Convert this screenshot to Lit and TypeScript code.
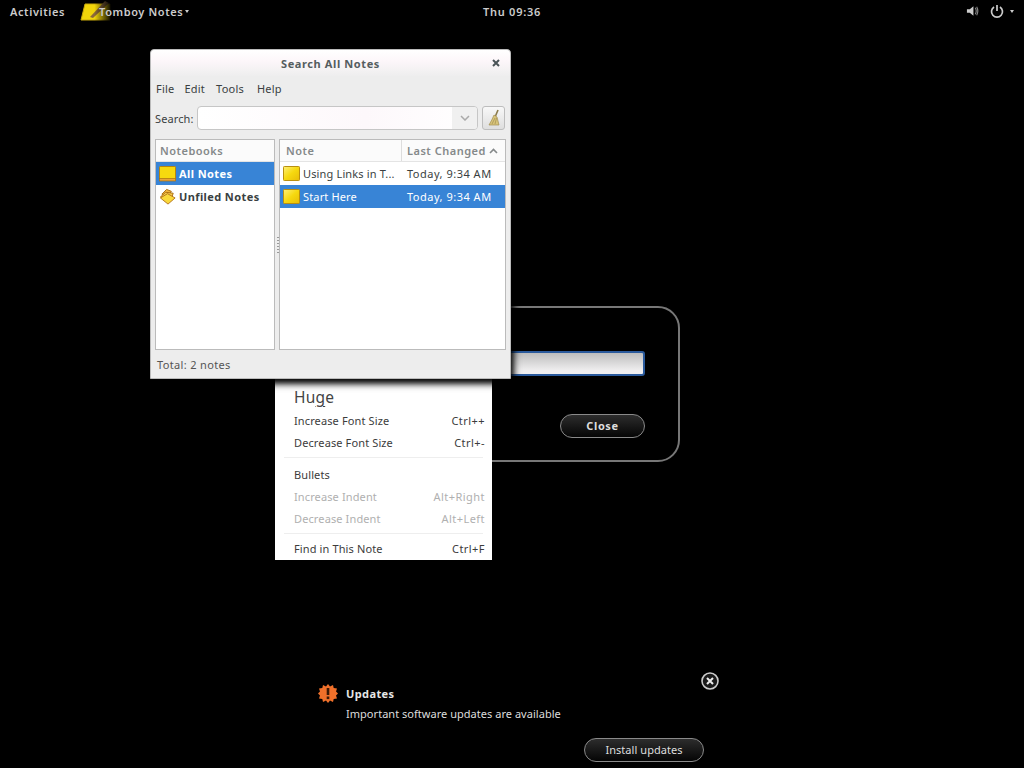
import { LitElement, html, css } from "lit";
import { customElement } from "lit/decorators.js";

const noteIcon = (sel = false) => html`<svg class="nicon" width="18" height="16" viewBox="0 0 18 16">
  <defs><linearGradient id="ng${sel ? 1 : 0}" x1="0" y1="0" x2="1" y2="1"><stop offset="0" stop-color="#fff07a"/><stop offset=".5" stop-color="#f6d90f"/><stop offset="1" stop-color="#e8bd08"/></linearGradient></defs>
  <rect x=".5" y=".5" width="16" height="14" rx=".8" fill="url(#ng${sel ? 1 : 0})" stroke="#b88f10"/>
</svg>`;

const bookIcon = html`<svg class="nicon" width="18" height="16" viewBox="0 0 18 16">
  <rect x=".5" y=".5" width="16" height="14" rx=".8" fill="#f6d90f" stroke="#b8860b"/>
  <rect x=".5" y="12.5" width="16" height="2.5" fill="#e8a33a" stroke="#a8700f" stroke-width=".7"/>
</svg>`;

const unfiledIcon = html`<svg class="nicon" width="18" height="18" viewBox="0 0 19 18">
  <path d="M3 6 L8 1 L13 3 L10 8Z" fill="#f3b640" stroke="#a86c10"/>
  <path d="M1.5 9 L7 4 L15 5 L13 11Z" fill="#f5c94a" stroke="#a86c10"/>
  <path d="M1.5 10 L9 5.5 L17 10 L9.5 16.5Z" fill="#f9d93a" stroke="#b5741a"/>
</svg>`;

@customElement("app-root")
export class AppRoot extends LitElement {
  static styles = css`
    :host { display: block; width: 1024px; height: 768px; background: #000; overflow: hidden; position: relative;
      font-family: "Noto Sans", "Open Sans", sans-serif; font-size: 11px; color: #3a3f41; letter-spacing: .3px; }
    * { box-sizing: border-box; }
    .panel { position: absolute; left: 0; top: 0; width: 1024px; height: 22px; display: grid; grid-template-columns: 1fr auto 1fr; align-items: center;
      color: #ccc; font-weight: 600; font-size: 11px; letter-spacing: .6px; }
    .pl { display: flex; align-items: center; padding-left: 10px; }
    .appmenu { display: flex; align-items: center; margin-left: 15px; position: relative; }
    .appname { margin-left: -13px; }
    .tri { width: 0; height: 0; border: 2.5px solid transparent; border-top: 3px solid #ccc; border-bottom: 0; margin-left: 2px; }
    .clock { font-weight: 600; color: #ccc; letter-spacing: .75px; }
    .pr { display: flex; justify-content: flex-end; align-items: center; gap: 9px; padding-right: 10px; }
    .power { display: flex; align-items: center; gap: 6px; margin-left: 2px; }
    .power .tri { margin: 0; }

    .dialog { position: absolute; left: 300px; top: 306px; width: 380px; height: 156px; border: 2px solid #777; border-radius: 22px; background: #000;
      display: flex; flex-direction: column; align-items: flex-end; padding: 43px 33px 0 0; }
    .entry { width: 160px; height: 25px; border: 2px solid #2a5a9c; border-radius: 3px; background: linear-gradient(#bdbdbd, #f0eff0 85%); }
    .pill { border: 1px solid #8a8a8a; border-radius: 13px; background: linear-gradient(#2d2d2d, #050505); color: #ddd;
      display: flex; align-items: center; justify-content: center; font-size: 11px; padding-bottom: 1px; }
    .close { margin-top: 38px; width: 85px; height: 24px; font-weight: 700; letter-spacing: .6px; }

    .menu { position: absolute; left: 275px; top: 378px; width: 217px; height: 182px; background: #fff; overflow: hidden; padding-top: 6px; color: #444; }
    .huge { font-size: 15.5px; padding-left: 19px; height: 26px; line-height: 26px; letter-spacing: .2px; }
    .huge u { text-underline-offset: 3px; }
    .mi { display: flex; justify-content: space-between; height: 22px; line-height: 22px; padding: 0 7px 0 19px; font-size: 11px; color: #3c3c3c; letter-spacing: .12px; }
    .mi.dis { color: #b0b0b0; }
    .key { letter-spacing: .45px; }
    .sep { height: 1px; background: #eee; margin: 3px 9px 6px; }
    .sep.b { margin-bottom: 4px; }

    .win { position: absolute; left: 150px; top: 49px; width: 361px; height: 330px; background: #ededed; border-radius: 4px 4px 0 0;
      border: 1px solid #bbb; display: flex; flex-direction: column; box-shadow: 0 2px 6px 1px #000, 0 2px 9px 2px rgba(0,0,0,.8); }
    .tb { height: 26px; flex: none; background: linear-gradient(#fff 0, #fdf7fa 40%, #eee 100%); border-radius: 4px 4px 0 0; display: flex; align-items: center; justify-content: center; position: relative;
      font-weight: 700; font-size: 11px; color: #555d5f; letter-spacing: .6px; }
    .x { position: absolute; right: 9px; top: 8px; }
    .mb { display: flex; gap: 11px; padding: 0 5px; height: 24px; align-items: center; flex: none; letter-spacing: .22px; }
    .mb span:nth-child(2) { margin-left: -1px; }
    .mb span:nth-child(4) { margin-left: 2px; }
    .search { display: flex; align-items: center; height: 24px; margin: 6px 5px 0 4px; flex: none; }
    .search label { width: 42px; letter-spacing: .1px; }
    .combo { flex: 1; height: 24px; background: linear-gradient(90deg, #fff 0, #fdf8fb 60%, #fff 100%); border: 1px solid #c6c6c6; border-radius: 4px; display: flex; justify-content: flex-end; overflow: hidden; }
    .drop { width: 25px; background: #f0f0f0; display: flex; align-items: center; justify-content: center; }
    .clr { width: 23px; height: 24px; margin-left: 4px; border: 1px solid #bdbdbd; border-radius: 3px; background: linear-gradient(#f8f8f8, #dedede); display: flex; align-items: center; justify-content: center; }
    .panes { flex: 1; display: flex; margin: 9px 4px 0 4px; gap: 4px; min-height: 0; }
    .pane { background: #fff; border: 1px solid #bbb; display: flex; flex-direction: column; position: relative; }
    .p1 { width: 120px; flex: none; }
    .p2 { flex: 1; }
    .grip { position: absolute; left: -3px; top: 97px; width: 2px; height: 16px;
      background: repeating-linear-gradient(#999 0 1px, #eee 1px 3px); }
    .hd { height: 22px; flex: none; display: flex; align-items: center; color: #85898a; font-weight: 600; font-size: 11px; letter-spacing: .5px; border-bottom: 1px solid #e4e4e4; background: #fbfbfb; }
    .hd span { padding-left: 4px; }
    .row { height: 23px; display: flex; align-items: center; }
    .row.sel { background: #3884d6; color: #fff; }
    .nb { font-weight: 700; gap: 2px; padding-left: 3px; letter-spacing: .4px; }
    .c1 { width: 122px; flex: none; display: flex; align-items: center; padding-left: 3px; gap: 2px; white-space: nowrap; overflow: hidden; letter-spacing: .15px; }
    .c2 { flex: 1; padding-left: 5px; white-space: nowrap; letter-spacing: .5px; }
    .hd .c1 { height: 100%; border-right: 1px solid #ddd; padding-left: 2px; letter-spacing: .5px; }
    .hd .c2 { display: flex; align-items: center; gap: 3px; padding-left: 5px; }
    .hd .c2 span { padding: 0; }
    .status { height: 28px; flex: none; padding: 1px 6px 0; display: flex; align-items: center; color: #555; letter-spacing: .35px; }

    .n-ic { position: absolute; left: 318px; top: 684px; }
    .n-txt { position: absolute; left: 346px; top: 686px; color: #ddd; display: flex; flex-direction: column; gap: 4px; font-size: 11px; }
    .n-t { font-weight: 700; color: #e6e6e6; letter-spacing: .4px; height: 16px; line-height: 16px; }
    .n-b { height: 16px; line-height: 16px; letter-spacing: .03px; }
    .n-x { position: absolute; left: 701px; top: 672px; }
    .n-btn { position: absolute; left: 584px; top: 738px; width: 120px; height: 24px; letter-spacing: .05px; }
  `;

  render() {
    return html`
      <div class="panel">
        <div class="pl">
          <span>Activities</span>
          <div class="appmenu">
            <svg width="32" height="20" viewBox="0 0 32 20">
              <defs><linearGradient id="fade" x1="0" x2="1" y1="0" y2="0"><stop offset=".45" stop-color="#fff"/><stop offset="1" stop-color="#000"/></linearGradient>
                <mask id="fm"><rect width="32" height="20" fill="url(#fade)"/></mask></defs>
              <g mask="url(#fm)">
                <path d="M5 3 H30 V19 H1Z" fill="#f1d40a" stroke="#c9a90a"/>
                <path d="M10 16 L25 0 L29 2 L13 17Z" fill="#8d6a3a"/>
              </g>
            </svg>
            <span class="appname">Tomboy Notes</span><i class="tri"></i>
          </div>
        </div>
        <div class="clock">Thu 09:36</div>
        <div class="pr">
          <svg width="13" height="14" viewBox="0 0 14 14"><path d="M1 5 H4 L8 2 V12 L4 9 H1Z" fill="#ccc"/><path d="M10 3.5 Q12 7 10 10.5 M11.5 2.5 Q14 7 11.5 11.5" fill="none" stroke="#888" stroke-width="1.2"/></svg>
          <span class="power">
            <svg width="14" height="14" viewBox="0 0 14 14"><path d="M4 3 A5.5 5.5 0 1 0 10 3" fill="none" stroke="#ccc" stroke-width="1.7"/><path d="M7 1 V7" stroke="#ccc" stroke-width="1.7"/></svg>
            <i class="tri"></i>
          </span>
        </div>
      </div>

      <div class="dialog">
        <div class="entry"></div>
        <div class="pill close">Close</div>
      </div>

      <div class="menu">
        <div class="huge">Hu<u>g</u>e</div>
        <div class="mi"><span>Increase Font Size</span><span class="key">Ctrl++</span></div>
        <div class="mi"><span>Decrease Font Size</span><span class="key">Ctrl+-</span></div>
        <div class="sep"></div>
        <div class="mi"><span>Bullets</span></div>
        <div class="mi dis"><span>Increase Indent</span><span class="key">Alt+Right</span></div>
        <div class="mi dis"><span>Decrease Indent</span><span class="key">Alt+Left</span></div>
        <div class="sep b"></div>
        <div class="mi"><span>Find in This Note</span><span class="key">Ctrl+F</span></div>
      </div>

      <div class="win">
        <div class="tb">Search All Notes
          <svg class="x" width="10" height="10" viewBox="0 0 10 10"><path d="M2 2 L8 8 M8 2 L2 8" stroke="#4a5457" stroke-width="2"/></svg>
        </div>
        <div class="mb"><span>File</span><span>Edit</span><span>Tools</span><span>Help</span></div>
        <div class="search">
          <label>Search:</label>
          <div class="combo"><div class="drop"><svg width="10" height="6" viewBox="0 0 10 6"><path d="M1 1 L5 5 L9 1" fill="none" stroke="#aaa" stroke-width="1.5"/></svg></div></div>
          <div class="clr"><svg width="14" height="18" viewBox="0 0 14 18"><path d="M11 1 L8.5 7" stroke="#8a7a4a" stroke-width="1.6"/><path d="M7 6 L10 8 L12 16 L2 16 Q5 11 7 6Z" fill="#d8c47a" stroke="#a08c50" stroke-width=".7"/><path d="M5 15 L8 9 M8 15 L9.5 9" stroke="#a08c50" stroke-width=".7"/></svg></div>
        </div>
        <div class="panes">
          <div class="pane p1">
            <div class="hd"><span>Notebooks</span></div>
            <div class="row nb sel">${bookIcon}All Notes</div>
            <div class="row nb">${unfiledIcon}Unfiled Notes</div>
          </div>
          <div class="pane p2">
            <i class="grip"></i>
            <div class="hd"><div class="c1"><span>Note</span></div><div class="c2"><span>Last Changed</span>
              <svg width="9" height="6" viewBox="0 0 9 6"><path d="M1 5 L4.5 1.5 L8 5" fill="none" stroke="#85898a" stroke-width="1.6"/></svg></div></div>
            <div class="row"><div class="c1">${noteIcon()}Using Links in T...</div><div class="c2">Today, 9:34 AM</div></div>
            <div class="row sel"><div class="c1">${noteIcon(true)}Start Here</div><div class="c2">Today, 9:34 AM</div></div>
          </div>
        </div>
        <div class="status">Total: 2 notes</div>
      </div>

      <svg class="n-ic" width="20" height="19" viewBox="0 0 20 19">
        <path d="M10 0 L12 2.5 L15 1 L15.7 4 L19 4.5 L18 7.5 L20 9.5 L18 11.5 L19 14.5 L15.7 15 L15 18 L12 16.5 L10 19 L8 16.5 L5 18 L4.3 15 L1 14.5 L2 11.5 L0 9.5 L2 7.5 L1 4.5 L4.3 4 L5 1 L8 2.5Z" fill="#f0702a"/>
        <rect x="8.7" y="4" width="2.6" height="7" fill="#3a1a08"/><rect x="8.7" y="12.5" width="2.6" height="2.6" fill="#3a1a08"/>
      </svg>
      <div class="n-txt">
        <div class="n-t">Updates</div>
        <div class="n-b">Important software updates are available</div>
      </div>
      <svg class="n-x" width="18" height="18" viewBox="0 0 18 18">
        <circle cx="9" cy="9" r="8" fill="#1a1a1a" stroke="#ccc" stroke-width="1.6"/>
        <path d="M6 6 L12 12 M12 6 L6 12" stroke="#eee" stroke-width="2"/>
      </svg>
      <div class="pill n-btn">Install updates</div>
    `;
  }
}
